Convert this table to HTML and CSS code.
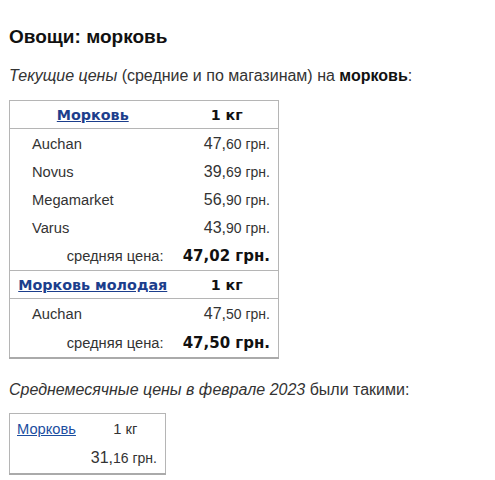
FILE: index.html
```html
<!DOCTYPE html>
<html lang="ru">
<head>
<meta charset="utf-8">
<link rel="stylesheet" href="styles.css">
</head>
<body>
<h1 class="title">Овощи: морковь</h1>
<p class="lead"><i>Текущие цены</i> (средние и по магазинам) на <b>морковь</b>:</p>
<table class="prices">
  <colgroup><col class="c1"><col class="c2"></colgroup>
  <tr class="head"><th><a href="#">Морковь</a></th><th>1 кг</th></tr>
  <tr class="first"><td class="shop">Auchan</td><td class="price">47,<small>60 грн.</small></td></tr>
  <tr><td class="shop">Novus</td><td class="price">39,<small>69 грн.</small></td></tr>
  <tr><td class="shop">Megamarket</td><td class="price">56,<small>90 грн.</small></td></tr>
  <tr><td class="shop">Varus</td><td class="price">43,<small>90 грн.</small></td></tr>
  <tr class="avg"><td class="avg-label">средняя цена:</td><td class="avg-val">47,02 грн.</td></tr>
  <tr class="head sep"><th><a href="#">Морковь молодая</a></th><th>1 кг</th></tr>
  <tr class="first"><td class="shop">Auchan</td><td class="price">47,<small>50 грн.</small></td></tr>
  <tr class="avg last"><td class="avg-label">средняя цена:</td><td class="avg-val">47,50 грн.</td></tr>
</table>
<p class="lead month"><i>Среднемесячные цены в феврале 2023</i> были такими:</p>
<table class="monthly">
  <colgroup><col class="mc1"><col class="mc2"></colgroup>
  <tr><td class="m-name"><a href="#">Морковь</a></td><td class="m-unit">1 кг</td></tr>
  <tr><td class="m-empty"></td><td class="m-price">31,<small>16 грн.</small></td></tr>
</table>
</body>
</html>
```
FILE: styles.css
```css
body {
  margin: 0;
  padding: 0 9px;
  font-family: "Liberation Sans", Arial, sans-serif;
  color: #333;
  background: #fff;
}
.title {
  margin: 0;
  padding-top: 26px;
  font-size: 19px;
  line-height: 22px;
  color: #111;
}
.lead {
  margin: 0;
  padding-top: 18px;
  font-size: 16px;
  line-height: 19px;
}
.lead b { color: #111; }
.prices {
  margin-top: 15px;
  border-collapse: collapse;
  border: 1px solid #b5b5b5;
  border-bottom: 2px solid #aaa;
  width: 270px;
}
.prices .c1 { width: 166px; }
.prices th {
  font-family: "DejaVu Sans", Verdana, sans-serif;
  font-weight: bold;
  font-size: 14.3px;
  color: #111;
  height: 27px;
  padding: 0;
  border-bottom: 1px solid #b5b5b5;
  text-align: center;
}
.prices .sep th { border-top: 1px solid #b5b5b5; }
.prices th a { color: #1c3e8c; }
.prices td {
  font-size: 14.7px;
  height: 28px;
  padding: 0;
  white-space: nowrap;
}
.prices .first td { height: 29px; }
.prices .last td { height: 29px; }
.shop { padding-left: 22px !important; }
.price, .m-price {
  text-align: right;
  padding-right: 8px !important;
  font-size: 16px !important;
  white-space: nowrap;
}
.price small, .m-price small { font-size: 14px; }
.avg-label {
  text-align: right;
  padding-right: 12px !important;
}
.avg-val {
  text-align: right;
  padding-right: 8px !important;
  font-family: "DejaVu Sans", Verdana, sans-serif;
  font-weight: bold;
  font-size: 15px !important;
  color: #111;
}
.month { padding-top: 21px; }
.monthly {
  margin-top: 14px;
  border-collapse: collapse;
  border: 1px solid #b5b5b5;
  border-bottom: 2px solid #aaa;
  table-layout: fixed;
  width: 156px;
}
.monthly .mc1 { width: 76px; }
.monthly .mc2 { width: 80px; }
.monthly td {
  font-size: 14.7px;
  padding: 0;
  height: 29px;
  white-space: nowrap;
}
.monthly tr + tr td { height: 30px; }
.m-name { padding-left: 7px !important; }
.m-name a { color: #1c4ea0; }
.m-unit { text-align: center; }
```
